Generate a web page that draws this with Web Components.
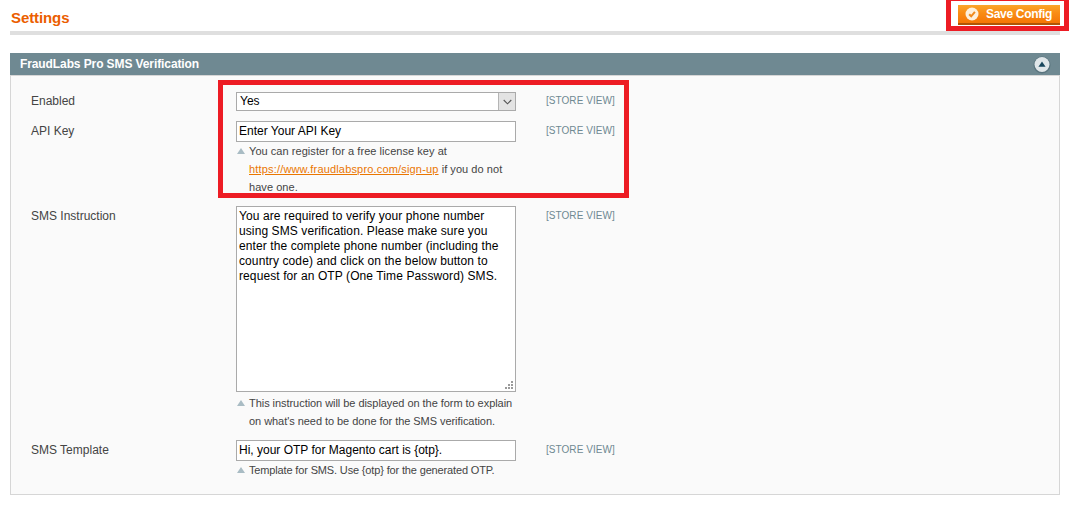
<!DOCTYPE html>
<html>
<head>
<meta charset="utf-8">
<title>Settings</title>
<style>
  html, body { margin: 0; background: #fff; }
  body { font: 12px/1.5 "Liberation Sans", Arial, sans-serif; color: #444; }
</style>
</head>
<body>
<config-page>
  <page-head slot="head" title="Settings"><save-button>Save Config</save-button></page-head>
  <config-panel title="FraudLabs Pro SMS Verification">
    <config-row label="Enabled" scope="[STORE VIEW]" pad="15" gap="10">
      <select-box>Yes</select-box>
    </config-row>
    <config-row label="API Key" scope="[STORE VIEW]" gap="10">
      <text-box>Enter Your API Key</text-box>
      <field-note>You can register for a free license key at <a href="#">https://www.fraudlabspro.com/sign-up</a> if you do not have one.</field-note>
    </config-row>
    <config-row label="SMS Instruction" scope="[STORE VIEW]" gap="10">
      <text-box multi>You are required to verify your phone number using SMS verification. Please make sure you enter the complete phone number (including the country code) and click on the below button to request for an OTP (One Time Password) SMS.</text-box>
      <field-note style="--note-spacing:-.05px">This instruction will be displayed on the form to explain on what's need to be done for the SMS verification.</field-note>
    </config-row>
    <config-row label="SMS Template" scope="[STORE VIEW]" gap="0">
      <text-box>Hi, your OTP for Magento cart is {otp}.</text-box>
      <field-note style="--note-spacing:-.15px">Template for SMS. Use {otp} for the generated OTP.</field-note>
    </config-row>
  </config-panel>
  <red-mark style="left:946px;top:-4px;width:113px;height:25px"></red-mark>
  <red-mark style="left:218px;top:80px;width:401px;height:108px"></red-mark>
</config-page>

<script>
class ConfigPage extends HTMLElement {
  constructor() {
    super();
    this.attachShadow({ mode: 'open' });
    this.shadowRoot.innerHTML = `
      <style>
        :host { display: block; position: relative; width: 1071px; height: 509px; overflow: hidden; }
        .wrap { display: flex; flex-direction: column; gap: 18px; padding: 0 10px 0 10px; width: 1050px; }
      </style>
      <div class="wrap"><slot name="head"></slot><slot></slot></div>
    `;
  }
}

class PageHead extends HTMLElement {
  constructor() {
    super();
    this.attachShadow({ mode: 'open' });
    this.shadowRoot.innerHTML = `
      <style>
        :host { display: flex; align-items: flex-start; justify-content: space-between; height: 31px; border-bottom: 4px solid #dfdfdf; }
        h3 { margin: 0; padding: 9px 0 0 1px; font: bold 15px/17px "Liberation Sans", Arial, sans-serif; letter-spacing: -.1px; color: #eb5e00; }
        .btn { padding-top: 5px; }
      </style>
      <h3></h3><div class="btn"><slot></slot></div>
    `;
  }
  connectedCallback() {
    this.shadowRoot.querySelector('h3').textContent = this.getAttribute('title');
  }
}

class SaveButton extends HTMLElement {
  constructor() {
    super();
    this.attachShadow({ mode: 'open' });
    this.shadowRoot.innerHTML = `
      <style>
        :host { display: flex; align-items: center; gap: 7px; box-sizing: border-box; width: 102px; height: 20px; padding: 0 0 1px 7px;
          background: linear-gradient(#fba52a 0, #f98c14 45%, #f57606 100%); border-bottom: 2px solid #b05505;
          font: bold 12px/16px "Liberation Sans", Arial, sans-serif; letter-spacing: -.3px; color: #fff; white-space: nowrap; }
        svg { flex: none; }
      </style>
      <svg width="14" height="14" viewBox="0 0 14 14">
        <circle cx="7" cy="7" r="6.5" fill="#fdf0dc"/>
        <path d="M4.2 7.2 6.2 9.3 9.9 4.9" fill="none" stroke="#f08a1c" stroke-width="2"/>
      </svg>
      <slot></slot>
    `;
  }
}

class ConfigPanel extends HTMLElement {
  constructor() {
    super();
    this.attachShadow({ mode: 'open' });
    this.shadowRoot.innerHTML = `
      <style>
        :host { display: block; }
        header { display: flex; align-items: center; justify-content: space-between; height: 22px; padding: 0 10px; background: #6f8992;
          font: bold 12px/22px "Liberation Sans", Arial, sans-serif; letter-spacing: -.1px; color: #fff; }
        .body { box-sizing: border-box; height: 420px; padding: 0 20px; background: #fafafa; border: 1px solid #d6d6d6; }
        svg { display: block; margin: 2px -1px 0 0; }
      </style>
      <header>
        <span class="t"></span>
        <svg width="18" height="18" viewBox="0 0 18 18">
          <circle cx="9" cy="9" r="8.5" fill="#58737d"/>
          <circle cx="9" cy="8.5" r="7.5" fill="#dfe6e9"/>
          <path d="M9 5.5 12.6 10.7H5.4z" fill="#17465c"/>
        </svg>
      </header>
      <div class="body"><slot></slot></div>
    `;
  }
  connectedCallback() {
    this.shadowRoot.querySelector('.t').textContent = this.getAttribute('title');
  }
}

class ConfigRow extends HTMLElement {
  constructor() {
    super();
    this.attachShadow({ mode: 'open' });
    this.shadowRoot.innerHTML = `
      <style>
        :host { display: grid; grid-template-columns: 205px 280px auto; align-items: start; color: #444; }
        .label { padding-top: 1px; font-size: 12px; line-height: 18px; color: #444; }
        .scope { padding: 1px 0 0 30px; font-size: 10px; line-height: 18px; letter-spacing: .05px; color: #6f8992; white-space: nowrap; }
        .value { display: flex; flex-direction: column; }
      </style>
      <div class="label"></div>
      <div class="value"><slot></slot></div>
      <div class="scope"></div>
    `;
  }
  connectedCallback() {
    this.shadowRoot.querySelector('.label').textContent = this.getAttribute('label');
    this.shadowRoot.querySelector('.scope').textContent = this.getAttribute('scope');
    this.style.paddingTop = (this.getAttribute('pad') || 0) + 'px';
    this.style.paddingBottom = (this.getAttribute('gap') || 0) + 'px';
  }
}

class SelectBox extends HTMLElement {
  constructor() {
    super();
    this.attachShadow({ mode: 'open' });
    this.shadowRoot.innerHTML = `
      <style>
        :host { display: flex; box-sizing: border-box; height: 19px; margin-top: 1px; background: #fff; border: 1px solid #aaa;
          font: 12px/17px "Liberation Sans", Arial, sans-serif; color: #000; }
        .v { flex: 1; padding-left: 3px; }
        .arrow { width: 16px; background: #e3e3e3; border-left: 1px solid #b5b5b5; display: flex; align-items: center; justify-content: center; }
      </style>
      <div class="v"><slot></slot></div>
      <div class="arrow"><svg width="9" height="6" viewBox="0 0 9 6"><path d="M.7 1 4.5 4.8 8.3 1" fill="none" stroke="#555" stroke-width="1.1"/></svg></div>
    `;
  }
}

class TextBox extends HTMLElement {
  constructor() {
    super();
    this.attachShadow({ mode: 'open' });
    this.shadowRoot.innerHTML = `
      <style>
        :host { display: block; position: relative; box-sizing: border-box; height: 21px; padding: 0 2px; background: #fff; border: 1px solid #aaa;
          font: 12px/19px "Liberation Sans", Arial, sans-serif; color: #000; white-space: nowrap; overflow: hidden; }
        :host([multi]) { height: 186px; margin-bottom: 2px; padding: 2px 10px 0 2px; white-space: normal; line-height: 15px; letter-spacing: .1px; }
        svg { display: none; position: absolute; right: 2px; bottom: 2px; }
        :host([multi]) svg { display: block; }
      </style>
      <slot></slot>
      <svg width="8" height="8" viewBox="0 0 8 8" fill="#9a9a9a">
        <rect x="6" y="0" width="2" height="2"/><rect x="3" y="3" width="2" height="2"/><rect x="6" y="3" width="2" height="2"/>
        <rect x="0" y="6" width="2" height="2"/><rect x="3" y="6" width="2" height="2"/><rect x="6" y="6" width="2" height="2"/>
      </svg>
    `;
  }
}

class FieldNote extends HTMLElement {
  constructor() {
    super();
    this.attachShadow({ mode: 'open' });
    this.shadowRoot.innerHTML = `
      <style>
        :host { display: block; position: relative; box-sizing: border-box; width: 290px; padding: 0 0 0 13px;
          font: 11px/18px "Liberation Sans", Arial, sans-serif; letter-spacing: var(--note-spacing, .05px); color: #444; }
        ::slotted(a) { color: #ea7601; letter-spacing: .17px; }
        svg { position: absolute; left: 1px; top: 6px; }
      </style>
      <svg width="8" height="6" viewBox="0 0 8 6"><path d="M4 0 8 6H0z" fill="#a9bcc4"/></svg>
      <slot></slot>
    `;
  }
}

class RedMark extends HTMLElement {
  constructor() {
    super();
    this.attachShadow({ mode: 'open' });
    this.shadowRoot.innerHTML = `
      <style>
        :host { display: block; position: absolute; border: 5px solid #ed1c24; pointer-events: none; }
      </style>
    `;
  }
}

customElements.define('config-page', ConfigPage);
customElements.define('page-head', PageHead);
customElements.define('save-button', SaveButton);
customElements.define('config-panel', ConfigPanel);
customElements.define('config-row', ConfigRow);
customElements.define('select-box', SelectBox);
customElements.define('text-box', TextBox);
customElements.define('field-note', FieldNote);
customElements.define('red-mark', RedMark);
</script>
</body>
</html>
